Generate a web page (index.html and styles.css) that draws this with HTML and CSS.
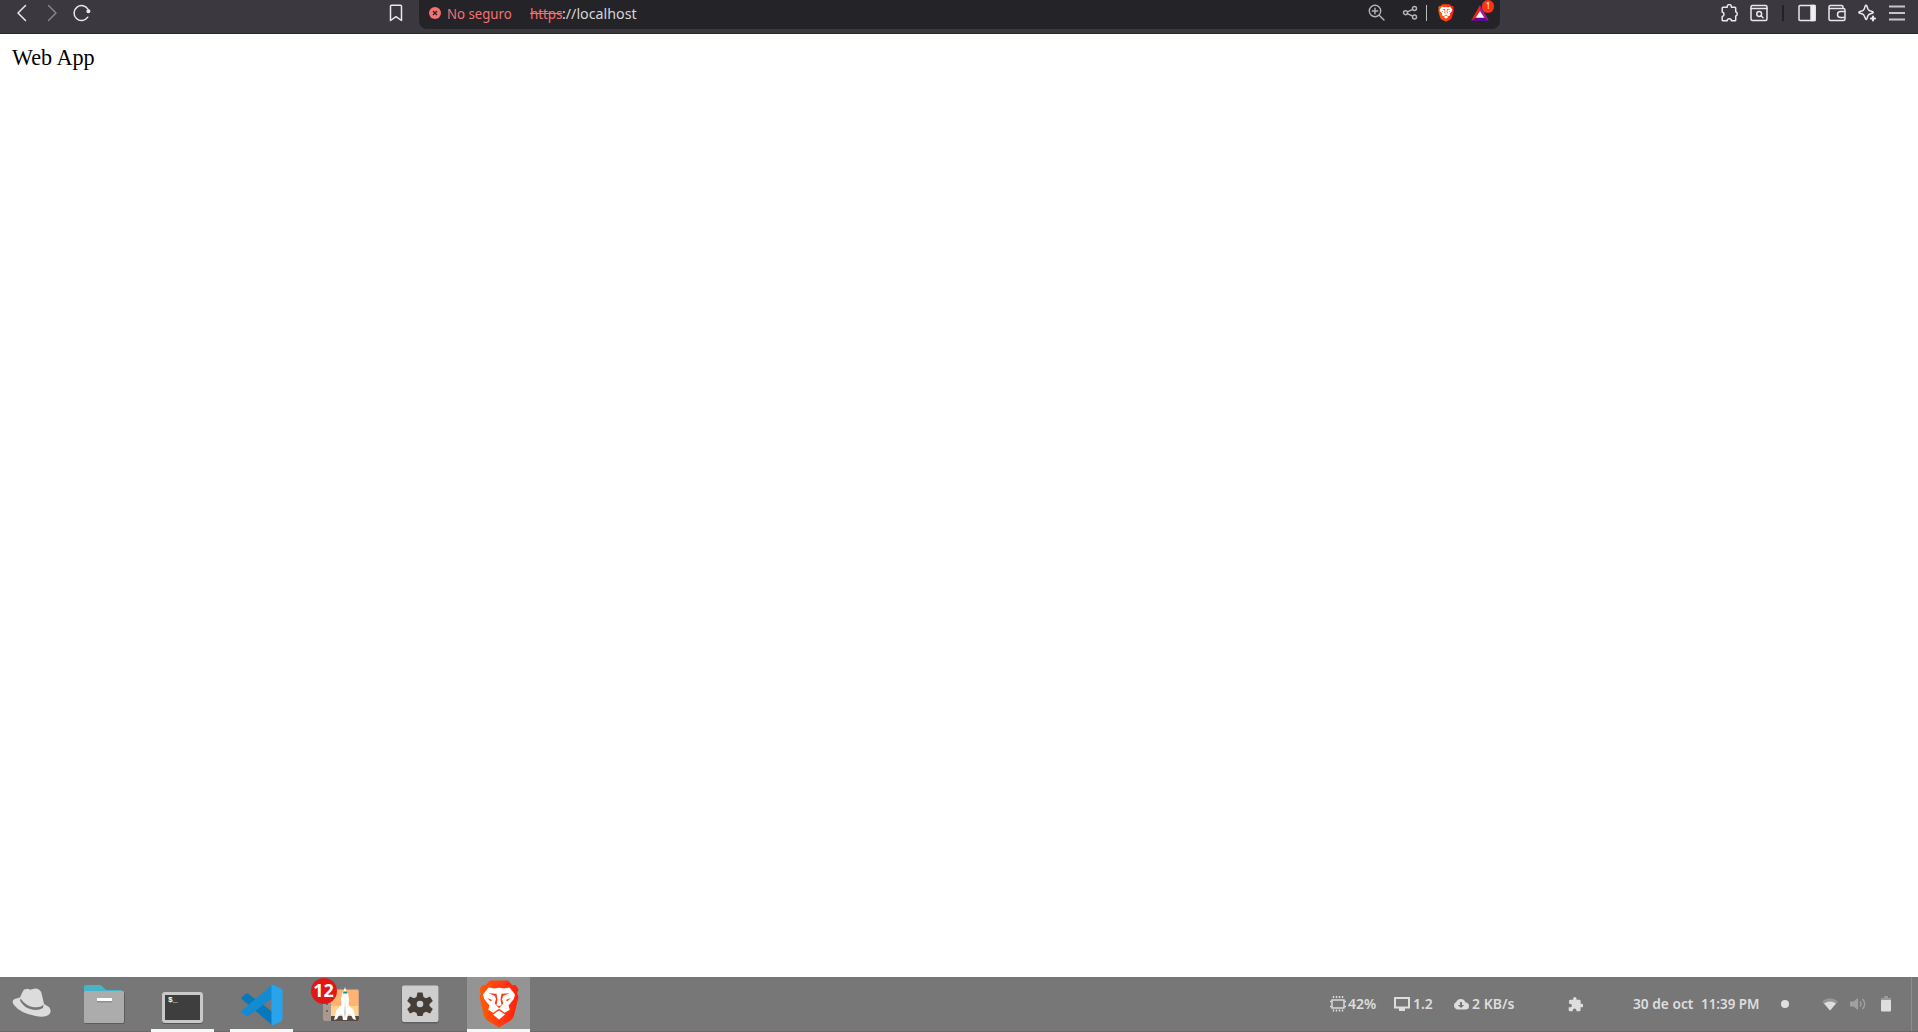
FILE: index.html
```html
<!DOCTYPE html>
<html lang="es">
<head>
<meta charset="utf-8">
<title>Web App</title>
<link rel="stylesheet" href="styles.css">
</head>
<body>
<svg class="defs" width="0" height="0" aria-hidden="true">
  <defs>
    <linearGradient id="lion-fill" x1="0" y1="0" x2="1" y2="0"><stop offset="0" stop-color="#ff5a00"/><stop offset=".6" stop-color="#ff3a12"/><stop offset="1" stop-color="#ff1e0a"/></linearGradient>
    <symbol id="lion" viewBox="0 0 40 48">
      <path fill="url(#lion-fill)" d="M11 .5h18l4.500 4.800 3-.4 3 4.300-1.300 4.300 1.300 3.500-4.500 18.500q-1 3.500-4 5.500L20 47.500 9 41q-3-2-4-5.500L.5 17l1.300-3.500L.5 9.200l3-4.300 3 .4z"/>
      <path fill="#fff" d="M9.500 7.500l5.500 1 5-.8 5 .8 5.500-1L36 14.500l-1.200 4.500-5.300 6.500 1.300 4.200-5.100 3L20 28.800l-5.700 3.900-5.100-3 1.300-4.200L5.200 19 4 14.500z"/>
      <path fill="#ff3b10" d="M9.500 13.200l8 .6 1 5.700-1 5.500 2.500 1.300 2.500-1.300-1-5.500 1-5.700 8-.6-6.200 2.600-1.300 3.200 1.300 4.500L20 28.200l-4.300-4.700 1.300-4.500-1.300-3.200z"/>
      <path fill="#ff4d0c" d="M8 18l5.500 2-2 1.200zM32 18l-5.500 2 2 1.200z"/>
      <path fill="#fff" d="M20 30.500l6 4-6 5-6-5z"/>
    </symbol>
  </defs>
</svg>

<header class="toolbar">
  <svg class="icon back" width="18" height="18" viewBox="0 0 18 18"><path d="M12.500 1.500L5 9l7.500 7.500"/></svg>
  <svg class="icon forward" width="18" height="18" viewBox="0 0 18 18"><path d="M5.500 1.500L13 9l-7.500 7.500"/></svg>
  <svg class="icon reload" width="18" height="18" viewBox="0 0 18 18"><path d="M14.800 13.200A7.500 7.500 0 1 1 15.200 5.500"/><circle class="solid" cx="15.400" cy="7.300" r="1.300"/></svg>
  <svg class="icon bookmark" width="14" height="18" viewBox="0 0 14 18"><path d="M2.500 1.200h9q1 0 1 1V16.500L7 12.700 1.500 16.500V2.200q0-1 1-1z"/></svg>

  <div class="address">
    <svg class="alert" width="12" height="12" viewBox="0 0 12 12"><circle cx="6" cy="6" r="6"/><path d="M4 4l4 4M8 4L4 8"/></svg>
    <span class="insecure">No seguro</span>
    <span class="scheme">https</span>
    <span class="host">://localhost</span>
    <div class="actions">
      <svg class="icon dim" width="17" height="17" viewBox="0 0 17 17"><circle cx="7" cy="7" r="5.700"/><path d="M11.200 11.200l4.800 4.800M4.300 7h5.400M7 4.300v5.400"/></svg>
      <svg class="icon dim share" width="16" height="16" viewBox="0 0 16 16"><circle cx="3.500" cy="7.700" r="2"/><circle cx="12.500" cy="3.500" r="2"/><circle cx="12.500" cy="12" r="2"/><path d="M5.400 6.800l5.300-2.400M5.400 8.600l5.300 2.500"/></svg>
      <span class="divider"></span>
      <svg class="shield" width="16" height="18" viewBox="0 0 40 48" preserveAspectRatio="none"><use href="#lion" width="40" height="48"/></svg>
      <div class="rewards">
        <svg width="18" height="16" viewBox="0 0 18 16"><path fill="#ff1d10" d="M9 0L0 16l5-3L9 6z"/><path fill="#9e1f90" d="M9 0l9 16-5-3L9 6z"/><path fill="#5b0a91" d="M0 16h18l-5-3.500H5z"/><path fill="#fff" d="M9 6l4.300 6.800H4.700z"/></svg>
        <span class="reward-count">1</span>
      </div>
    </div>
  </div>

  <div class="browser-tools">
    <svg class="icon" width="18" height="18" viewBox="0 0 18 18"><path d="M3 3.200h4.200V2.700a2.100 2.100 0 0 1 4.200 0v.5h3.500q.8 0 .8.800v3.800a2.200 2.200 0 0 1 0 4.200v4q0 .8-.8.800h-3.500a2.100 2.100 0 0 0-4.200 0H3q-.8 0-.8-.8v-3.600a2.300 2.300 0 0 0 0-4.500V4q0-.8.8-.8z"/></svg>
    <svg class="icon" width="18" height="18" viewBox="0 0 18 18"><rect x="1" y="1.500" width="16" height="15" rx="1.500"/><path d="M1 4.500h16"/><circle cx="9.200" cy="10" r="2.400"/><path d="M11 11.800l2 2"/></svg>
    <span class="tool-divider"></span>
    <svg class="icon" width="18" height="18" viewBox="0 0 18 18"><rect x="1" y="1.500" width="16" height="15" rx="1"/><path class="solid" d="M13 1.500h4v15h-4z"/></svg>
    <svg class="icon" width="18" height="18" viewBox="0 0 18 18"><path d="M15 4.500V3q0-1.500-1.500-1.500h-11Q1 1.500 1 3v12q0 1.500 1.500 1.500h13q1.500 0 1.500-1.500V6q0-1.500-1.500-1.500H1M17 7.500h-4.500a3 3 0 0 0 0 6H17"/></svg>
    <svg class="icon" width="18" height="18" viewBox="0 0 18 18"><path d="M8 1.200q.6 0 .8.600l1 3q.6 1.400 2 2l3 1q1 .5 0 1.200l-3 1q-1.400.6-2 2l-1 3q-.5 1-1.200 0l-1.300-3q-.5-1.500-1.800-2L1.300 9q-.8-.6 0-1.200l3.200-1q1.300-.6 1.800-2l1-3q.2-.6.700-.6z"/><path stroke-width="2" d="M15 12.500v4M13 14.500h4"/></svg>
    <svg class="icon menu" width="18" height="18" viewBox="0 0 18 18"><path d="M1 2.500h16M1 9h16M1 15.500h16"/></svg>
  </div>
</header>

<main class="page">Web App</main>

<footer class="taskbar">
  <nav class="apps">
    <div class="app hat"><svg width="40" height="31" viewBox="0 0 40 31"><path fill="#dcdcdc" d="M10 5l2-3.500 4-.8 2 1 5-1.200q5 .2 6.500 4.500L32 16l5 3q3 4 .5 7-4 4-14 2Q8 25 2 17-1 13 2.500 11L8 9.500z"/><path fill="#777" d="M8.500 10.500q5 7 12 8.500 7 1.200 11-2l-.5 3q-5 3-12 1.300Q11 19 8 12.500z"/></svg></div>
    <div class="app folder"><svg width="42" height="41" viewBox="0 0 42 41"><rect x="1" y="8" width="41" height="32" rx="2" fill="#5c5c5c"/><path fill="#45b6c8" d="M3 1h13.500q1.500 0 2.500 1l4 4h15q1.500 0 1.500 2H1V3q0-2 2-2z"/><rect x="1" y="7" width="40" height="32" rx="1.500" fill="#acacac"/><path fill="#909090" d="M14 17h15v1.500H14z"/><path fill="#fff" d="M14 14h15v3H14z"/></svg></div>
    <div class="app running terminal"><div class="terminal-screen">$_</div></div>
    <div class="app running code"><svg width="42" height="42" viewBox="0 0 42 42"><path fill="#0878bd" d="M1 13l4-3.200q1-.8 2.200 0L41 35l-9.500 6.500L.8 15.200Q0 14 1 13z"/><path fill="#138bd0" d="M1 28.800l4 3.200q1 .8 2.200 0L34 12 31.500.5.800 26.500q-.8 1.200.2 2.300z"/><path fill="#28a4ed" d="M31.500.5L40 4.500q1.500.8 1.500 2.500v28q0 1.700-1.500 2.500l-8.500 4-1-1V1.500z"/></svg></div>
    <div class="app updates"><div class="update-art"><svg width="36" height="35" viewBox="0 0 36 35"><rect y="2" width="36" height="32" rx="2" fill="#a89890"/><path fill="#ffb571" d="M8 3h26q1.500 0 1.500 1.500V19H8z"/><path fill="#ffd18c" d="M8 19h27.500v11H8z"/><path fill="#564842" d="M8 29h28v3q0 2-2 2H8z"/><path fill="#6f635d" d="M3 16h2v2H3zM3 23h2v2H3z"/><path fill="#fff" d="M22 0l1 3q3 4 3 9l-.5 6 5 5 2.500 10-3-1-2-4-3-1-1 6h-4l-1-6-3 1-2 4-3 1 2.500-10 5-5-.5-6q0-5 3-9z"/><path fill="#168d9b" d="M20.500 4.500h3.500l.5 2h-4.500z"/><path fill="#c3cacc" d="M22 14l.8 12-.8 6-.8-6z"/></svg><span class="update-count">12</span></div></div>
    <div class="app settings"><svg width="38" height="39" viewBox="0 0 38 39"><rect x=".5" y="1" width="37.500" height="37.500" rx="3" fill="#606060"/><rect x="1" y=".5" width="36.500" height="36.500" rx="2" fill="#cecece"/><path fill="#453e38" d="M16.500 7.500h5l1 4.500 2.500 1.300 4-1.800 2.800 4.500-3.300 3v2l3.300 3L29 28.500l-4-1.800-2.500 1.300-1 3h-5l-1-3-2.500-1.300-4 1.800L6.200 24l3.300-3v-2l-3.300-3L9 11.500l4 1.800 2.500-1.300z"/><circle cx="19" cy="19" r="3.300" fill="#cecece"/></svg></div>
    <div class="app running active"><svg width="40" height="48"><use href="#lion" width="40" height="48"/></svg></div>
  </nav>

  <div class="tray">
    <div class="stat cpu"><svg width="16" height="16" viewBox="0 0 16 16"><rect class="line" x="2" y="4" width="12" height="8"/><path class="line" d="M3.500 0v2M6.500 0v2M9.500 0v2M12.500 0v2M3.500 13.500v2M6.500 13.500v2M9.500 13.500v2M12.500 13.500v2M0 5.500h1.500M0 10.500h1.500M14.500 5.500H16M14.500 10.500H16"/></svg><span>42%</span></div>
    <div class="stat load"><svg width="16" height="16" viewBox="0 0 16 16"><path fill-rule="evenodd" d="M0 1h16v11.500h-5V15H5v-2.500H0zM2 3v7.500h12V3z"/></svg><span>1.2</span></div>
    <div class="stat network"><svg width="16" height="12" viewBox="0 0 16 12"><path fill-rule="evenodd" d="M4 11.500a4 4 0 0 1-.8-7.500A5 5 0 0 1 12.500 4.500a3.500 3.500 0 0 1 0 7zM7 4v3H4.800L8 10l3.200-3H9V4z"/></svg><span>2 KB/s</span></div>
    <svg class="extension" width="15" height="15" viewBox="0 0 22 22"><path d="M20 10h-1.500V6a2 2 0 0 0-2-2h-4V2.500a2.500 2.500 0 0 0-5 0V4h-4a2 2 0 0 0-2 2v3.800H3a2.700 2.700 0 0 1 0 5.400H1V19a2 2 0 0 0 2 2h4v-1.500a2.700 2.700 0 0 1 5.400 0V21h4a2 2 0 0 0 2-2v-4H20a2.500 2.500 0 0 0 0-5z"/></svg>
    <span class="date">30 de oct</span>
    <span class="time">11:39 PM</span>
    <span class="dot"></span>
    <svg class="wifi" width="16" height="13" viewBox="0 0 16 13"><path opacity=".3" d="M8 12.500L0 3.500q8-6.500 16 0z"/><path d="M8 12.500L2 5.500q6-4 12 0z"/></svg>
    <svg class="volume" width="17" height="14" viewBox="0 0 17 14"><path d="M0 4.500h3.500L8 1v12L3.500 9.500H0z"/><path class="line" d="M10 4.500q2 2.500 0 5M12.500 2q4.500 5 0 10"/></svg>
    <svg class="battery" width="10" height="16" viewBox="0 0 10 16"><path opacity=".35" d="M3 0h4v2h3v4H0V2h3z"/><rect y="4" width="10" height="11.500" rx="1"/></svg>
    <span class="show-desktop"></span>
  </div>
</footer>
</body>
</html>
```

FILE: styles.css
```css
* { box-sizing: border-box; }
body {
  margin: 0;
  height: 1032px;
  display: flex;
  flex-direction: column;
  overflow: hidden;
  background: #fff;
}
svg { display: block; flex: none; }
.defs { position: absolute; }

.toolbar {
  height: 34px;
  flex: none;
  display: flex;
  align-items: flex-start;
  background: #3b393f;
  border-bottom: 1px solid #2c2430;
  font-family: "Noto Sans", sans-serif;
}
.icon {
  margin-top: 4px;
  fill: none;
  stroke: #e9e9ec;
  stroke-width: 1.5;
  stroke-linecap: round;
  stroke-linejoin: round;
}
.icon .solid { fill: #f1f1f4; }
.back { margin-left: 13px; }
.forward { margin-left: 12px; stroke: #85838a; }
.reload { margin-left: 12px; }
.bookmark { margin-left: 298px; }
.address {
  width: 1081px;
  height: 29px;
  margin-left: 16px;
  padding-left: 10px;
  display: flex;
  background: #242328;
  border-radius: 0 0 8px 8px;
  font-size: 15px;
  line-height: 26px;
  white-space: nowrap;
}
.alert { margin-top: 7px; fill: #f87171; stroke: #242328; stroke-width: 1.3; }
.alert circle { stroke: none; }
.insecure, .scheme, .host { transform-origin: left; }
.insecure { width: 65px; margin-left: 6px; color: #f87171; transform: scaleX(.88); }
.scheme { width: 32px; margin-left: 18px; color: #f87171; text-decoration: line-through; transform: scaleX(.885); }
.host { color: #d6d5da; transform: scaleX(.95); }
.actions { margin-left: auto; padding-right: 11px; display: flex; }
.dim { stroke: #b5b4ba; stroke-width: 1.4; }
.share { margin-left: 17px; margin-top: 5px; }
.divider { width: 1px; height: 16px; margin: 5px 11px 0 8px; background: #bbbac0; }
.shield { margin-top: 4px; }
.rewards { position: relative; margin: 5px 0 0 17px; }
.reward-count {
  position: absolute;
  left: 11px;
  top: -5px;
  width: 12px;
  height: 13px;
  border-radius: 6px;
  background: #ff3215;
  color: #fff;
  font-size: 8px;
  line-height: 12px;
  text-align: center;
}
.browser-tools { margin-left: auto; padding-right: 12px; display: flex; gap: 12px; }
.tool-divider { width: 2px; height: 16px; margin: 5px 2px 0; background: #222126; }
.menu { stroke: #c6c5c9; stroke-width: 1.8; stroke-linecap: butt; }

.page {
  flex: 1;
  padding: 12px;
  font: 22.2px/24px "Liberation Serif", serif;
  color: #000;
}

.taskbar {
  height: 55px;
  flex: none;
  display: flex;
  background: #777;
  border-bottom: 1px solid #6f686b;
  color: #dedede;
  font: 600 14px/54px "Noto Sans", sans-serif;
  white-space: nowrap;
}
.apps { height: 55px; display: flex; gap: 16px; }
.app { width: 63px; height: 55px; display: flex; justify-content: center; flex: none; }
.hat { padding-top: 11px; margin-right: -7px; }
.folder { padding-top: 7px; }
.running { border-bottom: 3px solid #f7f7f7; }
.terminal { padding-top: 15px; }
.terminal-screen {
  width: 41px;
  height: 31px;
  border: 3px solid #c9cac8;
  border-radius: 3px;
  background: #3e3e3e;
  box-shadow: 0 1px 0 #555;
  color: #fff;
  padding: 0 3px;
  font: bold 8px/10px "Liberation Mono", monospace;
}
.code { padding-top: 7px; }
.updates { padding-top: 10px; }
.update-art { position: relative; height: 35px; }
.update-count {
  position: absolute;
  left: -12px;
  top: -9px;
  width: 26px;
  height: 26px;
  border-radius: 50%;
  background: #e11717;
  color: #fff;
  font-size: 18px;
  font-weight: 700;
  line-height: 24px;
  text-align: center;
}
.settings { padding-top: 8px; }
.active { padding-top: 3px; background: #949494; }

.tray { margin-left: auto; display: flex; align-items: center; fill: #dedede; }
.line { fill: none; stroke: #dedede; stroke-width: 1.4; }
.stat { display: flex; align-items: center; gap: 3px; }
.cpu { width: 64px; gap: 2px; }
.load { width: 60px; }
.network { width: 114px; margin-left: -1px; margin-right: 1px; }
.extension { width: 15px; }
.date { width: 60px; margin-left: 50px; transform: scaleX(.98); transform-origin: left; }
.time { width: 58px; margin-left: 8px; transform: scaleX(.955); transform-origin: left; }
.dot { width: 8px; height: 8px; margin-left: 22px; border-radius: 50%; background: #e0e0e0; }
.wifi { margin-left: 33px; }
.volume { margin-left: 12px; opacity: .4; }
.battery { margin-left: 14px; }
.show-desktop { width: 7px; height: 54px; margin-left: 20px; border-left: 1px solid #8c8c8c; }
```
